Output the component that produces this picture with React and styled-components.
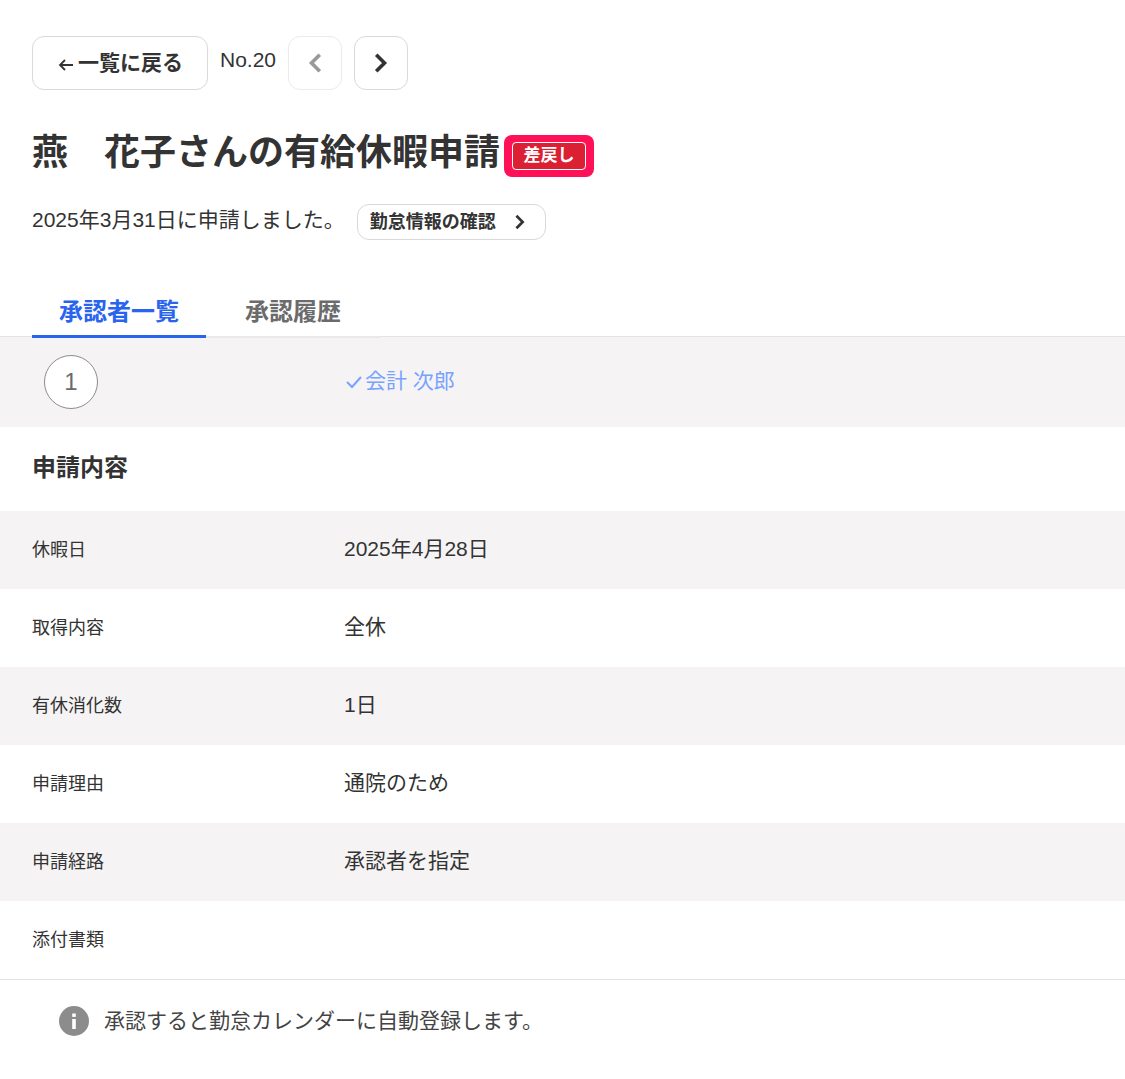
import React from 'react'
import styled, { createGlobalStyle } from 'styled-components'

const GlobalStyle = createGlobalStyle`
  html, body {
    margin: 0;
    padding: 0;
    background: #fff;
  }
  body {
    font-family: "Liberation Sans", "Noto Sans CJK JP", sans-serif;
    color: #333;
  }
`

const Page = styled.div`
  width: 1125px;
  height: 1079px;
  overflow: hidden;
`

const Head = styled.div`
  padding: 36px 32px 0;
`

const TopBar = styled.div`
  display: flex;
  align-items: center;
  height: 54px;
`

const BackButton = styled.button`
  display: flex;
  align-items: center;
  justify-content: center;
  gap: 3px;
  width: 176px;
  height: 54px;
  padding: 0 0 4px;
  background: #fff;
  border: 1px solid #d9d9d9;
  border-radius: 12px;
  color: #333;
  font-family: inherit;
  font-size: 21px;
  font-weight: 700;
`

const BackArrow = styled.svg`
  width: 18px;
  height: 18px;
  margin-top: 8px;
`

const RecordNo = styled.span`
  margin: -6px 12px 0;
  font-size: 21px;
  color: #333;
`

const PagerButton = styled.button`
  display: flex;
  align-items: center;
  justify-content: center;
  width: 54px;
  height: 54px;
  margin-right: 12px;
  padding: 0;
  background: #fff;
  border: 1px solid ${(p) => (p.disabled ? '#ebebeb' : '#d9d9d9')};
  border-radius: 12px;
  color: ${(p) => (p.disabled ? '#999' : '#333')};
`

const TitleRow = styled.div`
  display: flex;
  align-items: center;
  margin-top: 45px;
  height: 42px;
`

const Title = styled.h1`
  margin: -7px 0 0;
  font-size: 36px;
  font-weight: 700;
  line-height: 42px;
  color: #333;
  white-space: nowrap;
`

const BadgeFocus = styled.div`
  display: flex;
  margin-left: 4px;
  padding: 7px 8px;
  background: #ff1158;
  border-radius: 8px;
`

const Badge = styled.span`
  display: flex;
  align-items: center;
  justify-content: center;
  width: 74px;
  height: 28px;
  box-sizing: border-box;
  background: #dc2033;
  border: 1px solid #fff;
  border-radius: 4px;
  color: #fff;
  font-size: 17px;
  font-weight: 700;
  padding-bottom: 5px;
`

const SubRow = styled.div`
  display: flex;
  align-items: center;
  margin-top: 27px;
  height: 36px;
`

const Applied = styled.span`
  font-size: 21px;
  margin-top: -8px;
  color: #333;
`

const AttendanceButton = styled.button`
  display: flex;
  align-items: center;
  justify-content: space-between;
  width: 189px;
  height: 36px;
  box-sizing: border-box;
  margin-left: 12px;
  padding: 0 16px 0 12px;
  background: #fff;
  border: 1px solid #d9d9d9;
  border-radius: 12px;
  color: #333;
  font-family: inherit;
  font-size: 18px;
  font-weight: 700;
`

const AttendanceLabel = styled.span`
  margin-top: -4px;
`

const TabBar = styled.div`
  display: flex;
  height: 50px;
  margin-top: 46px;
  padding-left: 32px;
  border-bottom: 1px solid #e3e3e3;
`

const TabGroup = styled.div`
  display: flex;
  width: 348px;
  height: 52px;
  box-sizing: border-box;
  border-bottom: 2px solid #e9e9e9;
`

const Tab = styled.div`
  width: 174px;
  height: 52px;
  box-sizing: border-box;
  padding-top: 11px;
  text-align: center;
  font-size: 24px;
  line-height: 30px;
  font-weight: 700;
  color: ${(p) => (p.$active ? '#2964ee' : '#6b6b6b')};
  border-bottom: ${(p) => (p.$active ? '3px solid #2964ee' : 'none')};
`

const ApproverRow = styled.div`
  display: flex;
  align-items: center;
  height: 90px;
  padding: 0 0 0 44px;
  background: #f5f3f4;
`

const StepCircle = styled.div`
  display: flex;
  align-items: center;
  justify-content: center;
  width: 54px;
  height: 54px;
  box-sizing: border-box;
  background: #fff;
  border: 1px solid #8c8c8c;
  border-radius: 50%;
  color: #6b6b6b;
  font-size: 24px;
`

const Approver = styled.div`
  display: flex;
  align-items: center;
  margin-left: 247px;
  margin-top: -7px;
  color: #78a2ff;
  font-size: 21px;
`

const CheckIcon = styled.svg`
  width: 18px;
  height: 18px;
  margin-top: 7px;
  margin-right: 2px;
`

const SectionTitle = styled.h2`
  margin: 0;
  height: 84px;
  padding-left: 32px;
  font-size: 24px;
  font-weight: 700;
  line-height: 82px;
  color: #333;
`

const Row = styled.div`
  display: flex;
  align-items: center;
  height: 78px;
  padding-left: 32px;
  background: ${(p) => (p.$shaded ? '#f5f3f4' : '#fff')};
`

const Label = styled.div`
  width: 312px;
  padding-bottom: 4px;
  font-size: 18px;
  color: #333;
`

const Value = styled.div`
  padding-bottom: 6px;
  font-size: 21px;
  color: #333;
`

const Notice = styled.div`
  display: flex;
  align-items: center;
  height: 82px;
  padding-left: 59px;
  border-top: 1px solid #e3e3e3;
  font-size: 21px;
  color: #444;
`

const NoticeText = styled.span`
  margin-top: -4px;
`

const InfoIcon = styled.svg`
  width: 30px;
  height: 30px;
  margin-right: 15px;
`

const Chevron = ({ left, size = 24 }) => (
  <svg width={size} height={size} viewBox="0 0 24 24" fill="none" stroke="currentColor" strokeWidth="3.6" strokeLinecap="square">
    <path d={left ? 'M15.5 5l-7 7 7 7' : 'M8.5 5l7 7-7 7'} />
  </svg>
)

const rows = [
  ['休暇日', '2025年4月28日'],
  ['取得内容', '全休'],
  ['有休消化数', '1日'],
  ['申請理由', '通院のため'],
  ['申請経路', '承認者を指定'],
  ['添付書類', ''],
]

const App = () => {
  return (
    <Page>
      <GlobalStyle />
      <Head>
        <TopBar>
          <BackButton>
            <BackArrow viewBox="0 0 18 18" fill="none" stroke="#333" strokeWidth="1.8">
              <path d="M16 9H3M8 4L3 9l5 5" />
            </BackArrow>
            一覧に戻る
          </BackButton>
          <RecordNo>No.20</RecordNo>
          <PagerButton disabled>
            <Chevron left />
          </PagerButton>
          <PagerButton>
            <Chevron />
          </PagerButton>
        </TopBar>
        <TitleRow>
          <Title>燕　花子さんの有給休暇申請</Title>
          <BadgeFocus>
            <Badge>差戻し</Badge>
          </BadgeFocus>
        </TitleRow>
        <SubRow>
          <Applied>2025年3月31日に申請しました。</Applied>
          <AttendanceButton>
            <AttendanceLabel>勤怠情報の確認</AttendanceLabel>
            <Chevron size={18} />
          </AttendanceButton>
        </SubRow>
      </Head>
      <TabBar>
        <TabGroup>
          <Tab $active>承認者一覧</Tab>
          <Tab>承認履歴</Tab>
        </TabGroup>
      </TabBar>
      <ApproverRow>
        <StepCircle>1</StepCircle>
        <Approver>
          <CheckIcon viewBox="0 0 18 18" fill="none" stroke="#78a2ff" strokeWidth="2">
            <path d="M2 9l5 5L16 4" />
          </CheckIcon>
          会計 次郎
        </Approver>
      </ApproverRow>
      <SectionTitle>申請内容</SectionTitle>
      {rows.map(([label, value], index) => (
        <Row key={label} $shaded={index % 2 === 0}>
          <Label>{label}</Label>
          <Value>{value}</Value>
        </Row>
      ))}
      <Notice>
        <InfoIcon viewBox="0 0 30 30">
          <circle cx="15" cy="15" r="15" fill="#8c8c8c" />
          <rect x="13.2" y="13" width="3.6" height="10" fill="#fff" />
          <rect x="13.2" y="7.5" width="3.6" height="3.4" fill="#fff" />
        </InfoIcon>
        <NoticeText>承認すると勤怠カレンダーに自動登録します。</NoticeText>
      </Notice>
    </Page>
  )
}

export default App
